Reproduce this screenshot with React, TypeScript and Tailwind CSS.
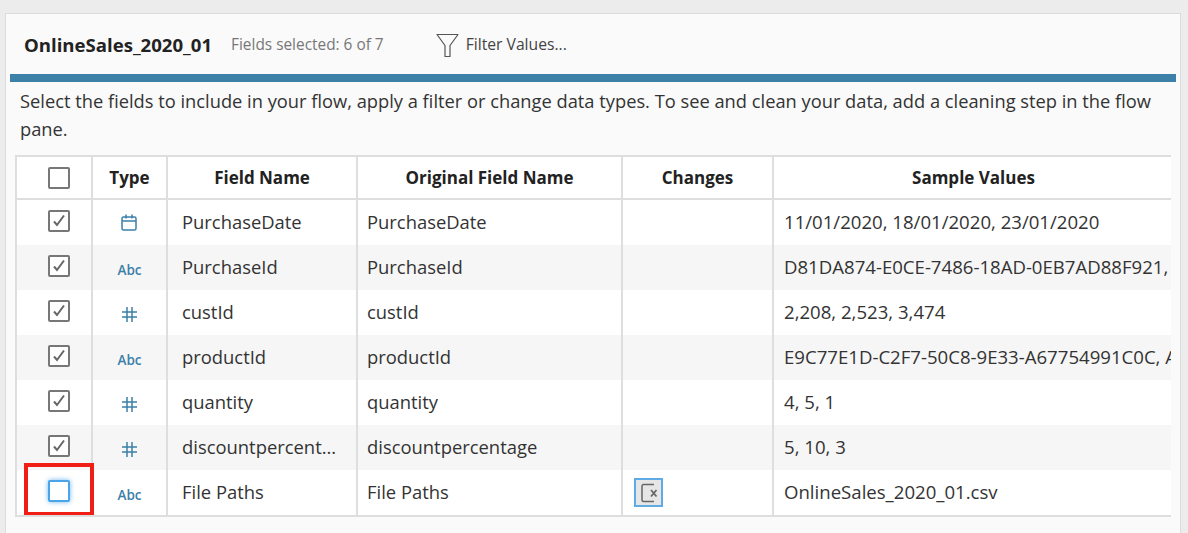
const font = { fontFamily: '"Open Sans", sans-serif' };

type Kind = "date" | "abc" | "num";

const rows: { kind: Kind; name: string; orig: string; sample: string; on: boolean }[] = [
  { kind: "date", name: "PurchaseDate", orig: "PurchaseDate", sample: "11/01/2020, 18/01/2020, 23/01/2020", on: true },
  { kind: "abc", name: "PurchaseId", orig: "PurchaseId", sample: "D81DA874-E0CE-7486-18AD-0EB7AD88F921,", on: true },
  { kind: "num", name: "custId", orig: "custId", sample: "2,208, 2,523, 3,474", on: true },
  { kind: "abc", name: "productId", orig: "productId", sample: "E9C77E1D-C2F7-50C8-9E33-A67754991C0C, A", on: true },
  { kind: "num", name: "quantity", orig: "quantity", sample: "4, 5, 1", on: true },
  { kind: "num", name: "discountpercent...", orig: "discountpercentage", sample: "5, 10, 3", on: true },
  { kind: "abc", name: "File Paths", orig: "File Paths", sample: "OnlineSales_2020_01.csv", on: false },
];

function TypeIcon({ kind }: { kind: Kind }) {
  if (kind === "abc") {
    return <span className="mt-[6px] text-[13.5px] font-semibold leading-none text-[#3d80a8]">Abc</span>;
  }
  if (kind === "date") {
    return (
      <svg width="16" height="17" viewBox="0 0 16 17" fill="none" stroke="#3d80a8" strokeWidth="1.5" className="mr-[1px]">
        <rect x="1" y="3" width="14" height="13" rx="1.5" />
        <path d="M1 7h14M5 0.5v4M11 0.5v4" />
      </svg>
    );
  }
  return (
    <svg width="17" height="17" viewBox="0 0 17 17" fill="none" stroke="#3d80a8" strokeWidth="1.5" className="mt-1">
      <path d="M6 1v15M11 1v15M1 6h15M1 11h15" />
    </svg>
  );
}

function Check({ on }: { on: boolean }) {
  return (
    <div className="flex h-[22px] w-[22px] items-center justify-center rounded-[2px] border-2 border-[#777] bg-white">
      {on && (
        <svg width="16" height="16" viewBox="0 0 16 16" fill="none" stroke="#666" strokeWidth="2">
          <path d="M3 8.5l3 3.5L13 2.5" />
        </svg>
      )}
    </div>
  );
}

const cols = "grid grid-cols-[76px_75px_190px_265px_151px_399px]";

export default function App() {
  return (
    <div className="h-[533px] w-[1188px] overflow-hidden bg-[#ececec] pt-[13px] pl-[5px] text-[#333]" style={font}>
      <div className="h-[530px] w-[1176px] border border-[#dcdcdc] bg-[#fafafa] pl-[4px]">
        <div className="flex h-[60px] items-center pl-[14px] pt-[2px]">
          <span className="text-[18.6px] font-bold text-[#222]">OnlineSales_2020_01</span>
          <span className="ml-[19px] text-[15.4px] text-[#777]">Fields selected: 6 of 7</span>
          <svg width="23" height="25" viewBox="0 0 23 25" fill="none" stroke="#555" strokeWidth="1.2" className="ml-[52px]">
            <path d="M1 1.5h21L14 12.5v11H9v-11z" strokeLinejoin="round" />
          </svg>
          <span className="ml-[7px] text-[15.7px] text-[#444]">Filter Values...</span>
        </div>
        <div className="h-[8px] w-[1166px] bg-[#3d80a8]" />
        <p className="mt-[5px] h-[68px] w-[1150px] pl-[10px] text-[18.3px] leading-[28px] text-[#333]">
          Select the fields to include in your flow, apply a filter or change data types. To see and clean your data, add a cleaning step in the flow pane.
        </p>
        <div className="relative ml-[5px] w-[1156px] overflow-hidden border-t-2 border-b-2 border-l-2 border-[#dedede] bg-white text-[18.4px] text-[#333]">
          <div className={`${cols} h-[43px] border-b-2 border-[#dedede] text-[17px] font-bold text-[#222]`}>
            <div className="flex items-center justify-center border-r-2 border-[#dedede] pl-[10px]"><Check on={false} /></div>
            <div className="flex items-center justify-center border-r-2 border-[#dedede]">Type</div>
            <div className="flex items-center justify-center border-r-2 border-[#dedede]">Field Name</div>
            <div className="flex items-center justify-center border-r-2 border-[#dedede]">Original Field Name</div>
            <div className="flex items-center justify-center border-r-2 border-[#dedede]">Changes</div>
            <div className="flex items-center justify-center">Sample Values</div>
          </div>
          {rows.map((r, i) => (
            <div key={r.name} className={`${cols} h-[45px] ${i % 2 === 1 ? "bg-[#f6f6f6]" : "bg-white"}`}>
              <div className="flex items-center justify-center border-r-2 border-[#dedede] pb-[4px] pl-[10px]">
                {r.on ? <Check on /> : (
                  <div className="h-[22px] w-[22px] rounded-[2px] border-2 border-[#4ba3e8] bg-white shadow-[0_0_5px_#6fb8f0]" />
                )}
              </div>
              <div className="flex items-center justify-center border-r-2 border-[#dedede]"><TypeIcon kind={r.kind} /></div>
              <div className="flex items-center border-r-2 border-[#dedede] pb-[2px] pl-[14px] whitespace-nowrap">{r.name}</div>
              <div className="flex items-center border-r-2 border-[#dedede] pb-[2px] pl-[9px] whitespace-nowrap">{r.orig}</div>
              <div className="flex items-center border-r-2 border-[#dedede] pl-[11px]">
                {!r.on && (
                  <div className="flex h-[29px] w-[29px] items-center justify-center border-2 border-[#5fabe6] bg-[#e6e6e6]">
                    <svg width="20" height="20" viewBox="0 0 20 20" fill="none" stroke="#666" strokeWidth="1.5">
                      <path d="M15 1.5H4.5a1.5 1.5 0 0 0-1.5 1.5v14a1.5 1.5 0 0 0 1.5 1.5H15" />
                      <path d="M12 7l5.5 6.5M17.5 7l-5.5 6.5" strokeWidth="1.8" />
                    </svg>
                  </div>
                )}
              </div>
              <div className="flex items-center overflow-hidden pb-[2px] pl-[10px] text-[18.6px] whitespace-nowrap">{r.sample}</div>
            </div>
          ))}
          <div className="absolute bottom-[-1px] left-[7px] h-[53px] w-[70px] border-4 border-[#f01e14]" />
        </div>
      </div>
    </div>
  );
}
